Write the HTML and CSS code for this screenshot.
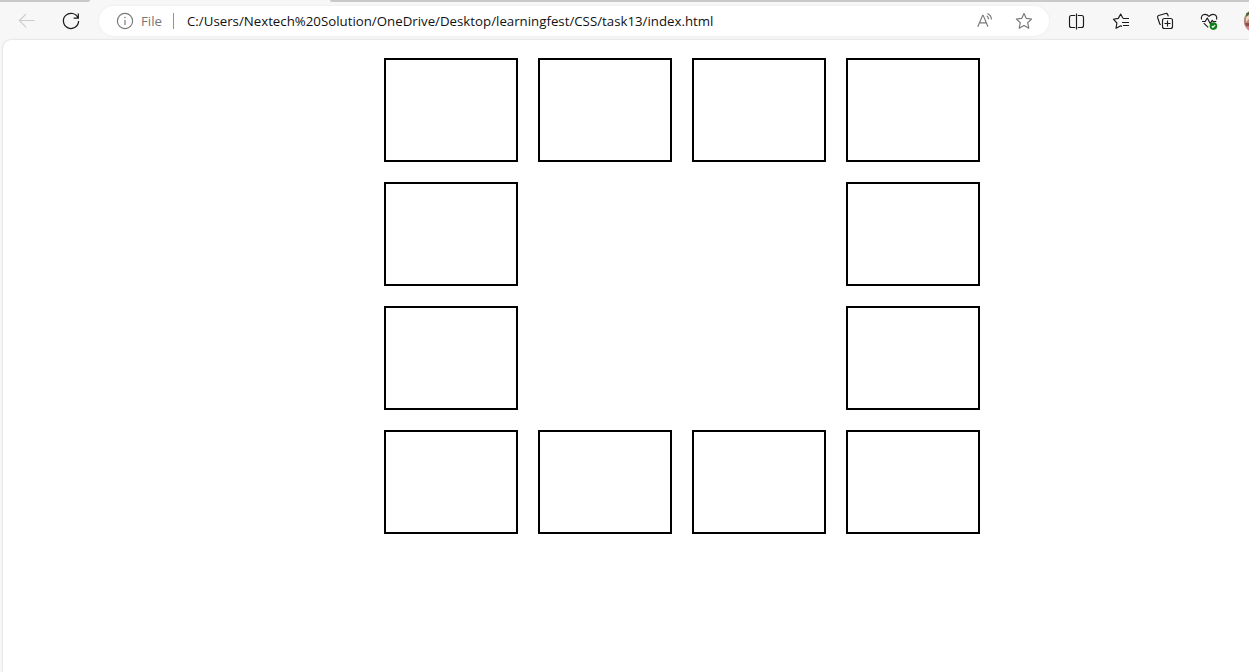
FILE: index.html
```html
<!DOCTYPE html>
<html lang="en">
<head>
<meta charset="utf-8">
<title>Task 13</title>
<link rel="stylesheet" href="styles.css">
</head>
<body>
<div class="tabs"><span class="tab tab-left"></span><span class="tab tab-right"></span></div>
<header class="toolbar">
  <span class="slot back"><svg class="icon" viewBox="0 0 20 20"><path d="M17.8 9.5H2.4M9.2 2.8 2.4 9.5l6.8 6.8"/></svg></span>
  <span class="slot"><svg class="icon reload" viewBox="0 0 20 20"><path d="M17.1 7.2A7.6 7.6 0 1 0 17.6 10.1M17.3 2.4V7.2H12.6"/></svg></span>
  <div class="address">
    <svg class="icon info" viewBox="0 0 20 20"><circle cx="10" cy="10" r="7.6"/><path d="M10 9v5M10 5.8v1.5"/></svg>
    <span class="file">File</span>
    <span class="divider"></span>
    <span class="url">C:/Users/Nextech%20Solution/OneDrive/Desktop/learningfest/CSS/task13/index.html</span>
    <span class="action"><svg class="icon" viewBox="0 0 20 20"><path d="M3.8 15.8 8.6 4.4h.6l4.8 11.4M5.5 11.8h6.8M12.8 5.1q1.7 1 1.7 3.2M13.4 2.6q4 1.8 4 6"/></svg></span>
    <span class="action"><svg class="icon" viewBox="0 0 20 20"><path d="m10 2.4 2.3 5 5.3.6-3.9 3.7 1.1 5.5-4.8-2.7-4.8 2.7 1.1-5.5L2.4 8l5.3-.6z"/></svg></span>
  </div>
  <span class="slot"><svg class="icon" viewBox="0 0 20 20"><path d="M8.2 4.5H4.4Q2.5 4.5 2.5 6.5v8q0 2 1.9 2h3.8M10.8 4.5h3.8q1.9 0 1.9 2v8q0 2-1.9 2h-3.8M9.5 2.5v16"/></svg></span>
  <span class="slot"><svg class="icon" viewBox="0 0 20 20"><path d="M11 15.5 9.8 14.8 5 17.3l.9-5.3L2.4 8.2l4.9-.8L9.7 3l2.2 4.3M12 7.5h6M11 11.5h7M12 14.5h6"/></svg></span>
  <span class="slot"><svg class="icon" viewBox="0 0 20 20"><path d="M5.7 13.7 4.8 13 2.6 6.5Q2.2 5 3.6 4.5L10.7 2.5Q12.2 2.2 12.7 3.5L13.3 5.4M9.5 7.5h6q2 0 2 2v6q0 2-2 2h-6q-2 0-2-2v-6q0-2 2-2zM12.5 9.5v6M9.5 12.5h6"/></svg></span>
  <span class="slot"><svg class="icon" viewBox="0 0 20 20"><path d="M2.6 8.5C1.6 5.5 3.5 3.3 6.1 3.3 8 3.3 9 4.2 10 5.3 11 4.2 12 3.3 14 3.3c2.8 0 4.5 2.3 3.5 5.2M3 10.5h3.2L8.3 7l2.9 5.5 2-3.2.9 1.2h3.2M4.8 12.2l4.4 4.1"/><circle class="ok" cx="14.4" cy="15.1" r="3.8"/><path class="check" d="m12.8 15.3 1.1 1 2.2-2.2"/></svg></span>
  <svg class="avatar" viewBox="0 0 6 22"><path fill="#b58a7a" d="M6 1.4Q.8 5 .8 11T6 20.6z"/><path fill="#526b39" d="M3 3.5 6 1.4V5L3 7z"/><path fill="#ead3c5" d="M3 7 6 5v4L3 12z"/><path fill="#974b48" d="M2 13h4v3H3z"/><path fill="#dc8291" d="M3 17h3v3.6z"/></svg>
</header>
<main class="page">
  <div class="grid">
    <div class="box"></div><div class="box"></div><div class="box"></div><div class="box"></div>
    <div class="box first"></div><div class="box last"></div>
    <div class="box first"></div><div class="box last"></div>
    <div class="box"></div><div class="box"></div><div class="box"></div><div class="box"></div>
  </div>
</main>
</body>
</html>
```
FILE: styles.css
```css
* { box-sizing: border-box; }
body {
  margin: 0;
  height: 672px;
  overflow: hidden;
  display: flex;
  flex-direction: column;
  background: #f7f7f7;
  font-family: "Open Sans", "Noto Sans", sans-serif;
}
.tabs { display: flex; justify-content: space-between; height: 2px; flex: none; }
.tab { background: #c9c9c9; }
.tab-left { width: 90px; border-bottom-right-radius: 2px; }
.tab-right { width: 919px; border-bottom-left-radius: 2px; }
.toolbar { display: flex; align-items: center; height: 38px; padding-left: 5px; flex: none; overflow: hidden; }
.slot { display: flex; justify-content: center; width: 44px; flex: none; color: #1b1b1b; }
.back { color: #cdcdcd; }
.icon { width: 20px; height: 20px; flex: none; fill: none; stroke: currentColor; stroke-width: 1.15; stroke-linejoin: round; }
.reload { stroke-width: 1.25; stroke-linejoin: miter; }
.address {
  display: flex;
  align-items: center;
  width: 950px;
  height: 30px;
  margin: 0 6px;
  padding: 0 5px 0 16px;
  flex: none;
  border-radius: 15px;
  background: #fff;
  box-shadow: 0 0 3px rgba(0, 0, 0, .06);
  color: #767676;
  font-size: 13.28px;
  line-height: 20px;
  white-space: nowrap;
}
.file { width: 32px; margin-left: 6px; }
.divider { width: 1px; height: 16px; background: #929292; }
.url { flex: 1; margin-left: 13px; color: #111; }
.action { display: flex; justify-content: center; width: 40px; }
.ok { fill: #118019; stroke: none; }
.check { stroke: #fff; }
.avatar { width: 6px; height: 22px; margin-left: 12px; flex: none; }
.page {
  flex: 1;
  margin-left: 3px;
  padding: 18px 0 0 381px;
  background: #fff;
  border-top-left-radius: 8px;
  box-shadow: 0 0 2px rgba(0, 0, 0, .22);
}
.grid { display: grid; grid-template-columns: repeat(4, 134px); grid-auto-rows: 104px; gap: 20px; }
.box { border: 2px solid #000; }
.first { grid-column: 1; }
.last { grid-column: 4; }
```
